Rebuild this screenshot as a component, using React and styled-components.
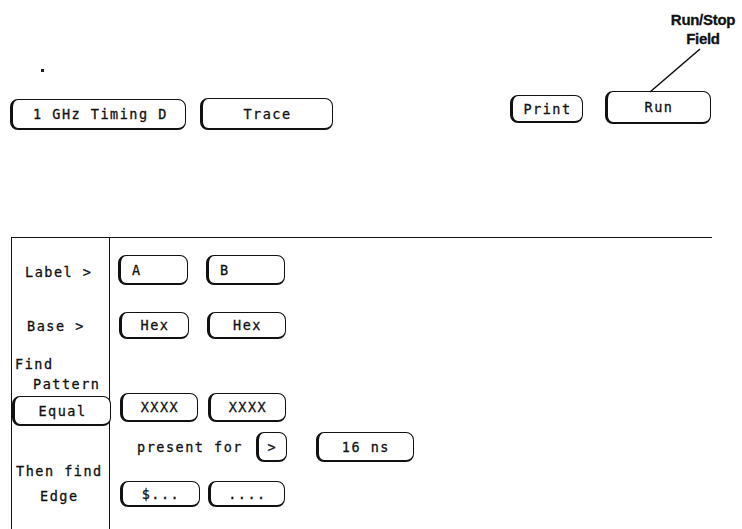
import React from "react";
import styled, { createGlobalStyle } from "styled-components";

const GlobalStyle = createGlobalStyle`
  html, body {
    margin: 0;
    padding: 0;
    background: #ffffff;
  }
  body {
    font-family: "DejaVu Sans Mono", "Liberation Mono", monospace;
    color: #111;
  }
`;

const Screen = styled.div`
  position: relative;
  width: 742px;
  height: 529px;
  overflow: hidden;
  background: #fff;
`;

const Callout = styled.div`
  position: absolute;
  top: 10px;
  left: 662px;
  width: 82px;
  text-align: center;
  font-family: "Liberation Sans", Arial, sans-serif;
  font-weight: 700;
  font-size: 15px;
  line-height: 19px;
  letter-spacing: -0.3px;
  color: #111;
  -webkit-text-stroke: 0.3px #111;
`;

const Leader = styled.svg`
  position: absolute;
  top: 0;
  left: 0;
  pointer-events: none;
`;

const Speck = styled.span`
  position: absolute;
  top: 69px;
  left: 41px;
  width: 3px;
  height: 3px;
  background: #222;
`;

const TopBar = styled.div`
  display: flex;
  align-items: flex-start;
  height: 40px;
  margin-top: 90px;
`;

const Group = styled.div`
  display: flex;
  align-items: flex-start;
  gap: ${(p) => p.gap}px;
  margin-left: ${(p) => p.left}px;
  margin-top: ${(p) => p.top || 0}px;
`;

const Key = styled.div`
  box-sizing: border-box;
  display: flex;
  align-items: center;
  justify-content: ${(p) => (p.align === "left" ? "flex-start" : "center")};
  padding-left: ${(p) => (p.align === "left" ? p.pad || 12 : 0)}px;
  width: ${(p) => p.w}px;
  height: ${(p) => p.h || 30}px;
  margin-top: ${(p) => p.offset || 0}px;
  margin-left: ${(p) => p.ml || 0}px;
  border: 1.5px solid #111;
  border-left-width: 3px;
  border-bottom-width: 2.5px;
  border-radius: 8px;
  background: #fff;
  font-size: 13.5px;
  letter-spacing: 1.5px;
  -webkit-text-stroke: 0.3px #111;
  white-space: nowrap;
  flex-shrink: 0;
`;

const Panel = styled.div`
  display: grid;
  grid-template-columns: 98px 1fr;
  margin: 107px 0 0 11px;
  width: 700px;
  height: 300px;
  border-top: 1.5px solid #111;
  border-left: 1.5px solid #111;
`;

const SideColumn = styled.div`
  display: flex;
  flex-direction: column;
  border-right: 1.5px solid #111;
`;

const SideLabel = styled.div`
  font-size: 13.5px;
  letter-spacing: 1.5px;
  line-height: 20px;
  -webkit-text-stroke: 0.3px #111;
  white-space: nowrap;
  padding-left: ${(p) => p.indent}px;
  margin-top: ${(p) => p.gap || 0}px;
`;

const SideKey = styled(Key)`
  margin-top: ${(p) => p.gap}px;
  margin-left: 0;
  position: relative;
  z-index: 1;
`;

const FieldColumn = styled.div`
  display: flex;
  flex-direction: column;
`;

const FieldRow = styled.div`
  display: flex;
  align-items: center;
  gap: ${(p) => p.gap || 0}px;
  padding-left: ${(p) => p.indent}px;
  margin-top: ${(p) => p.top}px;
`;

const Caption = styled.span`
  font-size: 13.5px;
  letter-spacing: 1.5px;
  -webkit-text-stroke: 0.3px #111;
  white-space: nowrap;
`;

export default function App() {
  return (
    <Screen>
      <GlobalStyle />
      <Speck />
      <Callout>
        Run/Stop
        <br />
        Field
      </Callout>
      <Leader width="742" height="529">
        <line x1="700" y1="49" x2="650" y2="92" stroke="#111" strokeWidth="1.6" />
      </Leader>

      <TopBar>
        <Group left={10} gap={14} top={9}>
          <Key w={176} h={31} align="left" pad={20}>
            1 GHz Timing D
          </Key>
          <Key w={133} h={32} offset={-1}>
            Trace
          </Key>
        </Group>
        <Group left={177} gap={22} top={1}>
          <Key w={73} h={28} offset={4}>
            Print
          </Key>
          <Key w={106} h={33}>
            Run
          </Key>
        </Group>
      </TopBar>

      <Panel>
        <SideColumn>
          <SideLabel indent={13} gap={24}>
            Label &gt;
          </SideLabel>
          <SideLabel indent={15} gap={34}>
            Base &gt;
          </SideLabel>
          <SideLabel indent={3} gap={18}>
            Find
          </SideLabel>
          <SideLabel indent={21}>Pattern</SideLabel>
          <SideKey w={99} h={30} gap={2}>
            Equal
          </SideKey>
          <SideLabel indent={4} gap={35}>
            Then find
          </SideLabel>
          <SideLabel indent={28} gap={5}>
            Edge
          </SideLabel>
        </SideColumn>

        <FieldColumn>
          <FieldRow indent={8} top={17} gap={18}>
            <Key w={70} h={30} align="left" pad={11}>
              A
            </Key>
            <Key w={79} h={30} align="left" pad={11}>
              B
            </Key>
          </FieldRow>
          <FieldRow indent={9} top={27} gap={18}>
            <Key w={70} h={27}>Hex</Key>
            <Key w={79} h={27}>Hex</Key>
          </FieldRow>
          <FieldRow indent={10} top={54} gap={10}>
            <Key w={78} h={29}>XXXX</Key>
            <Key w={78} h={29}>XXXX</Key>
          </FieldRow>
          <FieldRow indent={27} top={10}>
            <Caption>present for</Caption>
            <Key w={31} h={30} ml={13}>
              &gt;
            </Key>
            <Key w={98} h={30} ml={29}>
              16 ns
            </Key>
          </FieldRow>
          <FieldRow indent={10} top={19} gap={8}>
            <Key w={80} h={26}>$...</Key>
            <Key w={77} h={26}>....</Key>
          </FieldRow>
        </FieldColumn>
      </Panel>
    </Screen>
  );
}
